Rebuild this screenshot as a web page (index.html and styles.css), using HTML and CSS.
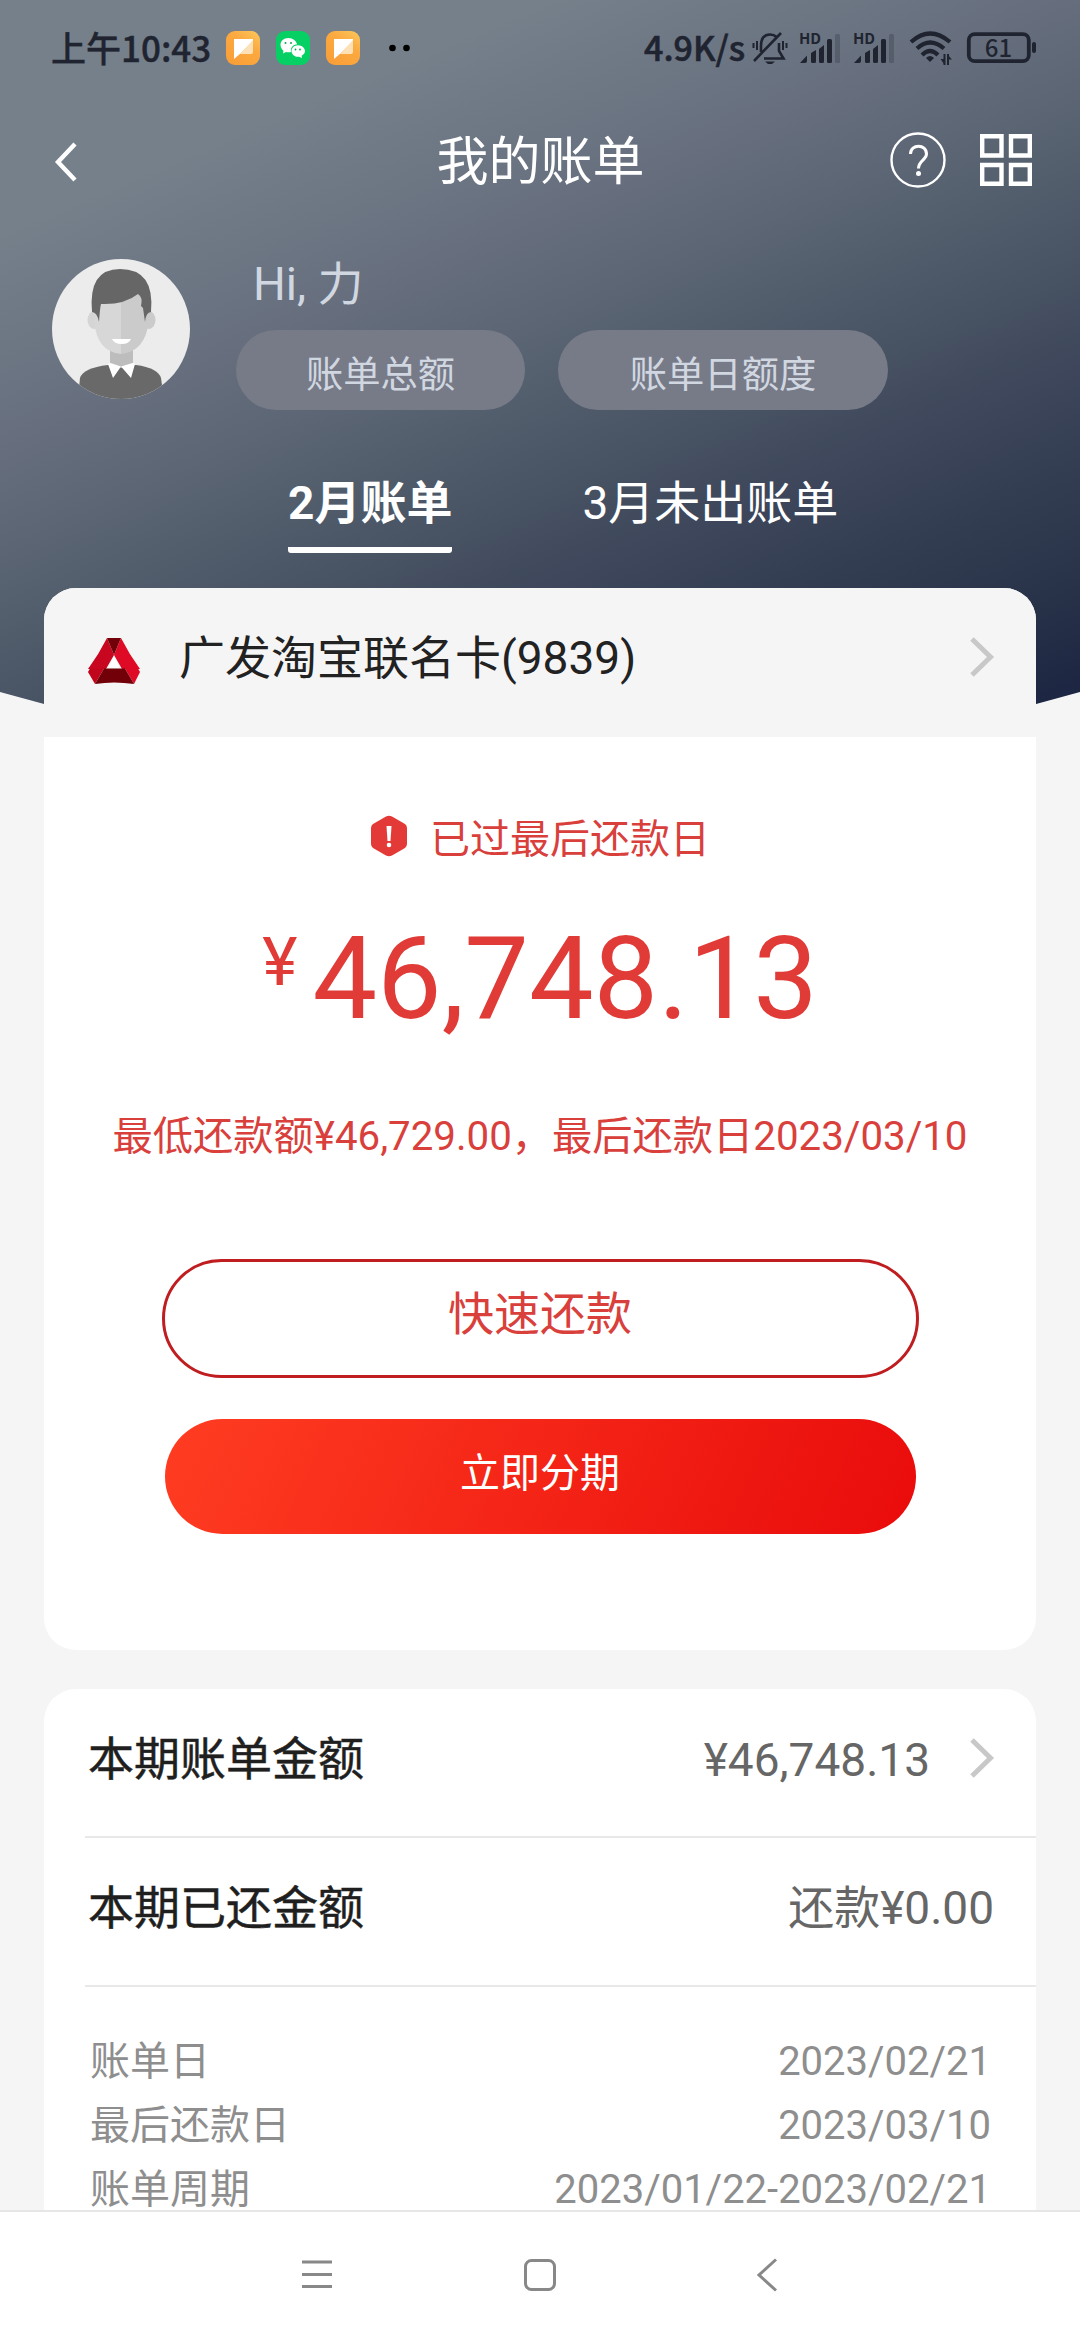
FILE: index.html
```html
<!DOCTYPE html>
<html lang="zh-CN">
<head>
<meta charset="utf-8">
<title>我的账单</title>
<link rel="stylesheet" href="styles.css">
</head>
<body>
<div class="screen">
  <div class="backdrop"></div>
  <header class="status">
    <span class="clock">上午10:43</span>
    <svg class="app first" viewBox="0 0 34 34"><defs><linearGradient id="or" x1="1" y1="0" x2="0.3" y2="1"><stop offset="0" stop-color="#fcc85c"/><stop offset=".45" stop-color="#fba940"/><stop offset="1" stop-color="#fa9f38"/></linearGradient></defs><rect width="34" height="34" rx="9" fill="url(#or)"/><path d="M8 8H27V10L15 22L8 28Z" fill="#fff"/><path d="M27 9V21Q27 23 25 23H14Z" fill="#fde0b5"/></svg>
    <svg class="app" viewBox="0 0 34 34"><rect width="34" height="34" rx="9" fill="#06cf63"/><path d="M12.500 7C7.500 7 4.500 10 4.500 14C4.500 16.500 6 18.500 7.500 19.700L7 22.500L10 21C12 21.500 14 21.300 15 21C14 16 18 13.300 21 13.500C20.500 10 17 7 12.500 7Z" fill="#fff"/><path d="M22 14.200C18 14.200 15.500 17 15.500 20C15.500 23.500 19 26.200 23 25.800L26 27L25.600 24.700C27.500 23.500 29 22 29 20C29 17 26 14.200 22 14.200Z" fill="#fff"/><g fill="#06a955"><circle cx="9.500" cy="12" r="1"/><circle cx="15" cy="12" r="1"/><circle cx="19.500" cy="18.500" r=".9"/><circle cx="24" cy="18.500" r=".9"/></g></svg>
    <svg class="app" viewBox="0 0 34 34"><rect width="34" height="34" rx="9" fill="url(#or)"/><path d="M8 8H27V10L15 22L8 28Z" fill="#fff"/><path d="M27 9V21Q27 23 25 23H14Z" fill="#fde0b5"/></svg>
    <svg class="dots" viewBox="0 0 22 8"><circle cx="3.500" cy="4" r="3.300"/><circle cx="17.500" cy="4" r="3.300"/></svg>
    <span class="speed">4.9K/s</span>
    <svg class="bell" viewBox="0 0 36 34" fill="none" stroke="#1f2430" stroke-width="2.600"><path d="M9 21V15Q9 3.500 18 3.500Q22 3.500 24.500 6M27 12V20L31.500 27.500H12M2 30L29 2"/><path d="M5 10V19M1.500 12V17M31 10V19M34.500 12V17" stroke-width="2"/><path d="M13 30.500H23L20 33H16Z" fill="#1f2430" stroke="none"/></svg>
    <svg class="signal" viewBox="0 0 42 34"><g fill="#1f2430"><path d="M1 32L8 24.500V30Q8 32 6 32Z"/><path d="M12 22L17 19V30.500Q17 32 15.500 32H13.500Q12 32 12 30.500Z"/><path d="M20 18L25 14V30.500Q25 32 23.500 32H21.500Q20 32 20 30.500Z"/><rect x="28" y="8" width="5" height="24" rx="1.500"/><rect x="36" y="3" width="5" height="29" rx="1.500" opacity=".25"/></g><text x="0" y="13" class="hd">HD</text></svg>
    <svg class="signal second" viewBox="0 0 42 34"><g fill="#1f2430"><path d="M1 32L8 24.500V30Q8 32 6 32Z"/><path d="M12 22L17 19V30.500Q17 32 15.500 32H13.500Q12 32 12 30.500Z"/><path d="M20 18L25 14V30.500Q25 32 23.500 32H21.500Q20 32 20 30.500Z"/><rect x="28" y="8" width="5" height="24" rx="1.500"/><rect x="36" y="3" width="5" height="29" rx="1.500" opacity=".25"/></g><text x="0" y="13" class="hd">HD</text></svg>
    <svg class="wifi" viewBox="0 0 44 36" fill="none" stroke="#1f2430" stroke-width="4.200"><path d="M2 12Q21 -5 41 12M8 18.500Q21 6.500 35 18.500M13 25Q21 17 29 25"/><path d="M17 28Q21 24 25 28L21 32Z" fill="#1f2430" stroke="none"/><path d="M35.500 24V35M39 24V35" stroke-width="2"/><path d="M31.500 29H35V34ZM43 29.500H39V25Z" fill="#1f2430" stroke="none"/></svg>
    <svg class="battery" viewBox="0 0 70 32"><rect x="1.800" y="2.200" width="60" height="27" rx="6" fill="none" stroke="#1f2430" stroke-width="3.800"/><rect x="65" y="10" width="4" height="11" rx="2" fill="#1f2430"/><text x="31.500" y="24.500" text-anchor="middle" class="level">61</text></svg>
  </header>
  <nav class="titlebar">
    <svg class="back" viewBox="0 0 22 40" fill="none" stroke="#fff" stroke-width="4.400"><path d="M20 2L3 20L20 38"/></svg>
    <h1>我的账单</h1>
    <div class="tools">
      <svg class="help" viewBox="0 0 56 56" fill="none" stroke="#fff"><circle cx="28" cy="28" r="26.500" stroke-width="2.400"/><path d="M20.500 22C20.500 11.500 36.500 11.500 36.500 22C36.500 28 28.500 28.500 28.500 36.500" stroke-width="3"/><circle cx="28.500" cy="41.500" r="2.500" fill="#fff" stroke="none"/></svg>
      <svg class="grid" viewBox="0 0 52 52" fill="none" stroke="#fff" stroke-width="4.400"><path d="M2.200 2.200H21.500V21.500H2.200ZM31 2.200H49.800V21.500H31ZM2.200 31H21.500V49.800H2.200ZM31 31H49.800V49.800H31Z"/></svg>
    </div>
  </nav>
  <section class="profile">
    <svg class="avatar" viewBox="0 0 138 140"><defs><clipPath id="face"><ellipse cx="69" cy="70" rx="69" ry="70"/></clipPath></defs><g clip-path="url(#face)"><rect width="138" height="140" fill="#ececec"/><path d="M26 140L28 119Q31 109 56 106H84Q106 109 109 119L112 140Z" fill="#696969"/><path d="M58 88H81V106L69.500 109L58 106Z" fill="#bdbdbd"/><ellipse cx="42" cy="61" rx="6.500" ry="9" fill="#d5d5d5"/><ellipse cx="97" cy="61" rx="6.500" ry="9" fill="#cbcbcb"/><path d="M44 36H69V95Q45 93 42 62Z" fill="#d7d7d7"/><path d="M69 34H92L97 62Q93 93 69 95Z" fill="#cbcbcb"/><path d="M40 53Q36 10 68 10Q103 10 99 53Q94 53 93 63L91 49L89 47Q91 38 86 35Q72 46 49 45Q48 48 47 63Q45 53 40 53Z" fill="#666"/><path d="M60 80H79Q77 85 70 85Q62 85 60 80Z" fill="#fff"/><path d="M56 105L58.500 104L69 107.500L61 119ZM83 105L80.500 104L69 107.500L79 119Z" fill="#fff"/></g></svg>
    <div class="who">
      <div class="hi">Hi, 力</div>
      <div class="pills"><span class="pill">账单总额</span><span class="pill wide">账单日额度</span></div>
    </div>
  </section>
  <div class="tabs"><span class="tab on">2月账单</span><span class="tab">3月未出账单</span></div>
  <main class="content">
    <section class="card bill">
      <div class="account">
        <svg class="logo" viewBox="0 0 52 46"><path d="M19 0L26 17L18 31H0Q11 16 19 0Z" fill="#c8061f"/><path d="M33 0Q41 16 52 31H34L26 17Z" fill="#df0a26"/><path d="M19 0H33L26 17Z" fill="#720009"/><path d="M0 34L2 30.500H16L7 46Z" fill="#c0051d"/><path d="M37 30.500H50L52 34L46 46Z" fill="#df0a26"/><path d="M16 30.500H37L46 46Q26 43 7 46Z" fill="#720009"/><path d="M26 18.500L31.500 29.500H20.500Z" fill="#fff"/></svg>
        <span class="account-name">广发淘宝联名卡(9839)</span>
        <svg class="arrow" viewBox="0 0 24 40" fill="none" stroke="#c8c8c8" stroke-width="5"><path d="M2 2L20.500 20L2 38"/></svg>
      </div>
      <div class="due">
        <div class="alert"><svg class="hex" viewBox="0 0 38 42"><path d="M16 1.500Q19 0 22 1.500L35 9Q37 10.500 37 13V29Q37 31.500 35 33L22 40.500Q19 42 16 40.500L3 33Q1 31.500 1 29V13Q1 10.500 3 9Z" fill="#e33a37"/><path d="M16.500 11H21.500L20.500 26H17.500Z" fill="#fff"/><circle cx="19" cy="30" r="2.300" fill="#fff"/></svg><span>已过最后还款日</span></div>
        <div class="amount"><span class="yen">¥</span><span class="sum">46,748.13</span></div>
        <p class="minimum">最低还款额¥46,729.00，最后还款日2023/03/10</p>
        <button class="btn outline">快速还款</button>
        <button class="btn solid">立即分期</button>
      </div>
    </section>
    <section class="card detail">
      <div class="row"><span class="label">本期账单金额</span><span class="value">¥46,748.13</span><svg class="arrow" viewBox="0 0 24 40" fill="none" stroke="#c8c8c8" stroke-width="5"><path d="M2 2L20.500 20L2 38"/></svg></div>
      <div class="row"><span class="label">本期已还金额</span><span class="value">还款¥0.00</span></div>
      <dl class="facts">
        <div><dt>账单日</dt><dd>2023/02/21</dd></div>
        <div><dt>最后还款日</dt><dd>2023/03/10</dd></div>
        <div><dt>账单周期</dt><dd>2023/01/22-2023/02/21</dd></div>
      </dl>
    </section>
  </main>
  <footer class="navbar">
    <svg viewBox="0 0 34 34" fill="none" stroke="#888" stroke-width="3"><path d="M2 4H32M2 16.500H32M2 28.500H32"/></svg>
    <svg class="home" viewBox="0 0 34 34" fill="none" stroke="#888" stroke-width="3"><rect x="2.500" y="2.500" width="29" height="29" rx="6"/></svg>
    <svg viewBox="0 0 34 34" fill="none" stroke="#888" stroke-width="3"><path d="M26 1.500L9 17L26 32.500"/></svg>
  </footer>
</div>
</body>
</html>
```

FILE: styles.css
```css
* { box-sizing: border-box; margin: 0; padding: 0; }
body { background: #f5f5f5; font-family: Roboto, "Noto Sans CJK SC", sans-serif; }
svg { display: block; flex: none; overflow: visible; }
.screen { position: relative; width: 1080px; height: 2340px; overflow: hidden; display: flex; flex-direction: column; }
.backdrop { position: absolute; z-index: -1; top: 0; left: 0; width: 1080px; height: 840px; background: linear-gradient(157deg, #75808b 0%, #75808b 18%, #666e7d 35%, #566170 46%, #4b5766 53%, #3e475b 63%, #283349 80%, #1d2642 88%, #1c2440 100%); clip-path: polygon(0 0, 100% 0, 100% 692px, 50% 839px, 0 692px); }

.status { height: 96px; display: flex; align-items: center; padding: 0 43px 0 51px; color: #1f2430; flex: none; }
.clock { width: 175px; margin-top: -2px; font: 500 35px/48px "Noto Sans CJK SC", sans-serif; white-space: nowrap; -webkit-text-stroke: .4px #1f2430; }
.app { width: 34px; height: 34px; margin-right: 16px; }
.dots { width: 22px; height: 8px; margin-left: 13px; }
.speed { font: 500 34px/48px "Noto Sans CJK SC", sans-serif; margin: -2px 0 0 auto; width: 108px; white-space: nowrap; -webkit-text-stroke: .6px #1f2430; }
.bell { width: 36px; height: 34px; }
.signal { width: 42px; height: 34px; margin-left: 11px; }
.signal.second { margin-left: 12px; }
.hd { font: 700 15px "Noto Sans CJK SC", sans-serif; fill: #1f2430; }
.wifi { width: 44px; height: 36px; margin-left: 14px; }
.battery { width: 70px; height: 32px; margin-left: 14px; }
.level { font: 500 24px "Noto Sans CJK SC", sans-serif; fill: #1f2430; }

.titlebar { height: 128px; padding: 0 48px 0 55px; display: grid; grid-template-columns: 1fr auto 1fr; align-items: center; color: #fff; flex: none; }
.back { width: 22px; height: 40px; margin-top: 4px; }
.titlebar h1 { font-size: 52px; font-weight: 400; line-height: 76px; padding-top: 5px; margin: 0 3px 0 -3px; }
.tools { display: flex; justify-content: flex-end; gap: 34px; }
.help { width: 56px; height: 56px; }
.grid { width: 52px; height: 52px; margin-top: 2px; }

.profile { height: 236px; padding: 35px 52px 0; display: flex; flex: none; }
.avatar { width: 138px; height: 140px; }
.who { margin-left: 46px; color: #d1d7e1; }
.hi { height: 71px; margin: -10px 0 10px 17px; font-size: 46px; line-height: 71px; }
.pills { display: flex; gap: 33px; }
.pill { width: 289px; height: 80px; border-radius: 40px; background: #777b88; font-size: 37.300px; line-height: 90px; text-align: center; }
.pill.wide { width: 330px; }

.tabs { height: 128px; display: flex; gap: 130px; padding-left: 288px; color: #fff; font-size: 46px; line-height: 66px; flex: none; }
.tab { height: 93px; padding-top: 10px; }
.tab.on { font-weight: 700; border-bottom: 6px solid #fff; border-radius: 3px; }

.content { flex: 1; min-height: 0; overflow: hidden; padding: 0 44px; display: flex; flex-direction: column; gap: 39px; }
.card { background: #fff; border-radius: 32px; overflow: hidden; flex: none; }
.bill { height: 1062px; }
.account { height: 149px; background: #f5f5f5; display: flex; align-items: center; padding: 0 42px 11px 44px; }
.logo { width: 52px; height: 46px; margin-top: 8px; }
.account-name { margin: -6px 0 0 39px; font-size: 46px; color: #222; }
.arrow { width: 24px; height: 40px; margin-left: auto; }
.due { display: flex; flex-direction: column; align-items: center; color: #d9403c; }
.alert { margin-top: 69px; height: 60px; display: flex; align-items: center; gap: 22px; font-size: 40px; }
.hex { width: 38px; height: 42px; margin-top: 0; }
.amount { height: 160px; margin-top: 33px; display: flex; color: #e13b37; }
.yen { font-size: 67px; line-height: 78px; margin-top: 24px; }
.sum { font-size: 115px; line-height: 160px; margin-left: 15px; }
.minimum { font-size: 40.250px; line-height: 60px; margin-top: 48px; white-space: nowrap; }
.btn { display: block; font-family: inherit; border: 0; background: none; }
.outline { width: 757px; height: 119px; margin-top: 92px; border: 3px solid #c01d20; border-radius: 60px; color: #d9403c; font-size: 46px; padding-bottom: 17px; }
.solid { width: 751px; height: 115px; margin-top: 41px; border-radius: 58px; background: linear-gradient(115deg, #ff3d22, #e90b0b); color: #fff; font-size: 40px; padding-bottom: 13px; }

.detail { height: 560px; border-radius: 32px 32px 0 0; }
.row { height: 149px; margin-left: 41px; padding: 0 42px 9px 3px; border-bottom: 2px solid #e8e8e8; display: flex; align-items: center; font-size: 46px; line-height: 68px; }
.label { color: #1f1f1f; margin-top: 1px; -webkit-text-stroke: .5px #1f1f1f; }
.value { margin-left: auto; color: #666; margin-top: 1px; }
.value:has(+ .arrow) { margin-top: 4px; }
.value + .arrow { margin-left: 40px; }
.facts { padding: 43px 45px 0 46px; font-size: 40px; line-height: 64px; color: #8e8e8e; }
.facts div { display: flex; justify-content: space-between; }

.navbar { height: 130px; border-top: 2px solid #e6e6e6; background: #fff; display: flex; align-items: center; padding: 0 0 2px 300px; flex: none; }
.navbar svg { width: 34px; height: 34px; }
.navbar .home { margin: 0 193px 0 189px; }
```
